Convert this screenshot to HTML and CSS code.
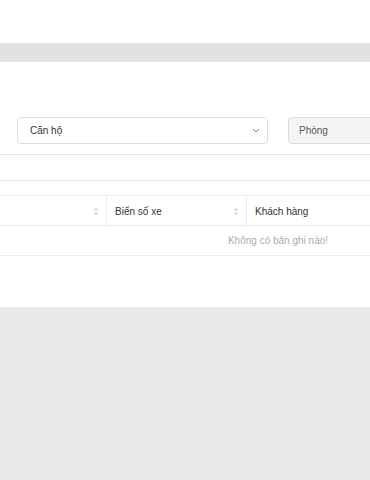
FILE: index.html
```html
<!DOCTYPE html>
<html lang="vi">
<head>
    <meta charset="UTF-8">
    <title>Danh sách xe</title>
    <link rel="stylesheet" href="styles.css">
</head>
<body>
    <!-- Top header -->
    <header class="topbar"></header>
    <div class="subbar"></div>

    <!-- Main card -->
    <main class="card">
        <div class="filters">
            <div class="select">
                <span>Căn hộ</span>
                <svg class="chevron" width="8" height="5" viewBox="0 0 8 5">
                    <path d="M1 1l3 3 3-3" fill="none" stroke="#888" stroke-width="1"/>
                </svg>
            </div>
            <div class="input disabled">Phòng</div>
        </div>

        <div class="toolbar"></div>

        <div class="table">
            <div class="thead">
                <div class="th col-1">
                    <span></span>
                    <svg class="sort" width="6" height="9" viewBox="0 0 6 9">
                        <path d="M3 0.5L5.5 3.5H0.5z M3 8.5L5.5 5.5H0.5z" fill="#d6d6d6"/>
                    </svg>
                </div>
                <div class="th col-2">
                    <span>Biển số xe</span>
                    <svg class="sort" width="6" height="9" viewBox="0 0 6 9">
                        <path d="M3 0.5L5.5 3.5H0.5z M3 8.5L5.5 5.5H0.5z" fill="#d6d6d6"/>
                    </svg>
                </div>
                <div class="th col-3">
                    <span>Khách hàng</span>
                </div>
            </div>
            <div class="empty">Không có bản ghi nào!</div>
        </div>
    </main>
</body>
</html>
```

FILE: styles.css
```css
* {
    box-sizing: border-box;
    margin: 0;
    padding: 0;
}

body {
    background-color: #e9e9e9;
    font-family: "Liberation Sans", Arial, sans-serif;
    font-size: 10px;
    color: #333333;
    overflow: hidden;
}

.topbar {
    background-color: #ffffff;
    height: 43px;
}

.subbar {
    height: 19px;
    background: linear-gradient(#e0e0e0, #e4e4e4);
    border-bottom: 1px solid #ececec;
}

.card {
    background-color: #ffffff;
    height: 245px;
    overflow: hidden;
    box-shadow: 0 4px 8px rgba(0, 0, 0, 0.1);
    position: relative;
}

.filters {
    display: flex;
    gap: 20px;
    padding: 55px 0 0 17px;
    height: 92px;
    white-space: nowrap;
}

.select,
.input {
    height: 27px;
    border: 1px solid #dcdcdc;
    border-radius: 4px;
    display: flex;
    align-items: center;
    padding: 0 12px;
    flex-shrink: 0;
}

.select {
    width: 251px;
    justify-content: space-between;
}

.chevron {
    margin-right: -5px;
}

.input {
    width: 200px;
    padding-left: 10px;
}

.input.disabled {
    background-color: #f5f5f5;
    color: #555555;
}

.toolbar {
    height: 27px;
    border-top: 1px solid #e6e6e6;
    border-bottom: 1px solid #e6e6e6;
    margin-bottom: 14px;
}

.table {
    width: 556px;
}

.thead {
    display: flex;
    height: 31px;
    border-top: 1px solid #ececec;
    border-bottom: 1px solid #ececec;
}

.th {
    display: flex;
    align-items: center;
    justify-content: space-between;
    padding: 1px 7px 0 8px;
    border-right: 1px solid #ececec;
}

.col-1 {
    width: 107px;
}

.col-2 {
    width: 140px;
}

.col-3 {
    flex: 1;
    border-right: 0;
}

.empty {
    height: 30px;
    line-height: 30px;
    text-align: center;
    color: #ababab;
    border-bottom: 1px solid #ececec;
}
```
